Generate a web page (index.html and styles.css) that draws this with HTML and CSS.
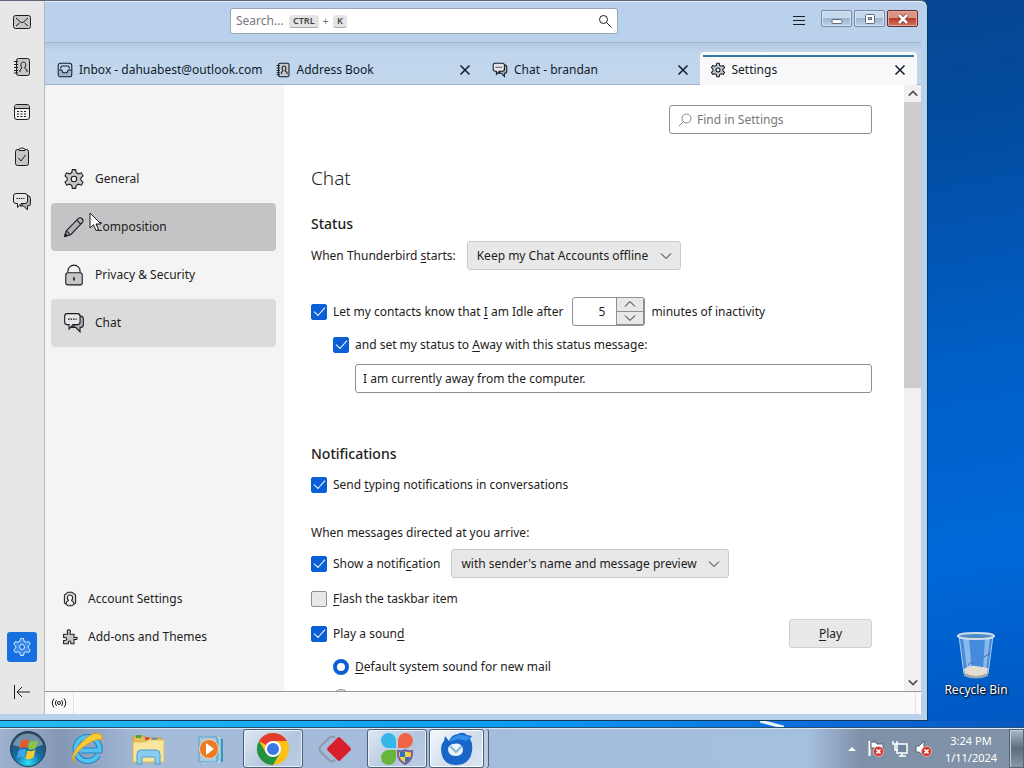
FILE: index.html
```html
<!DOCTYPE html>
<html lang="en">
<head>
    <meta charset="UTF-8">
    <meta name="viewport" content="width=device-width, initial-scale=1.0">
    <title>Settings - Mozilla Thunderbird</title>
    <link rel="stylesheet" href="styles.css">
</head>
<body>
    <!-- shared icons -->
    <svg class="defs" aria-hidden="true">
        <symbol id="i-mail" viewBox="0 0 20 20">
            <rect x="1.5" y="3.5" width="17" height="13" rx="2" fill="#c6c6c8"/>
            <path d="M4 6l4.500 4Q10 11.300 11.500 10L16 6M4 14l3.500-3M16 14l-3.500-3"/>
        </symbol>
        <symbol id="i-book" viewBox="0 0 20 20">
            <rect x="4.500" y="1.500" width="13" height="17" rx="2" fill="#c6c6c8"/>
            <path d="M2 4.500h4M2 7.500h4M2 10.500h4M2 13.500h4M2 16h4M8 15v-2l2-2c-2-3-1-6 1.300-6s3.300 3 1.200 6l2.500 2v2"/>
        </symbol>
        <symbol id="i-calendar" viewBox="0 0 20 20">
            <rect x="2.500" y="2.500" width="15" height="15" rx="2.500" fill="#f2f2f3"/>
            <path d="M3 6V4.500Q3 3 5 3h10q2 0 2 1.500V6z" fill="#bdbdc0" stroke="none"/>
            <path d="M2.500 6.500h15"/>
            <path d="M5 9.500h10M5 12h10M5 14.500h10" stroke-dasharray="2 1.500"/>
        </symbol>
        <symbol id="i-tasks" viewBox="0 0 20 20">
            <rect x="3.500" y="2.500" width="13" height="16" rx="2" fill="#c6c6c8"/>
            <path d="M7 2.500q0-1.500 3-1.500t3 1.500v1H7z" fill="#eee"/>
            <path d="M6.500 11l2.500 3 4.500-6"/>
        </symbol>
        <symbol id="i-chat" viewBox="0 0 20 20">
            <path d="M15 3.500q3.500 0 3.500 3v5q0 2.500-2.500 2.500h-.5v4L11.500 14H8l4-3 3-1z" fill="#b0b0b3"/>
            <path d="M4 1.500h9q2.500 0 2.500 2.500v5q0 2.500-2.500 2.500H9L5.500 15.500v-4H4Q1.500 11.500 1.500 9V4Q1.500 1.500 4 1.500z" fill="#e6e6e8"/>
            <path d="M4.500 6.500h8" stroke-dasharray="1.500 .8"/>
        </symbol>
        <symbol id="i-gear" viewBox="0 0 20 20">
            <path d="M8.500 1.500h3l.6 2.700 1.900 1.100 2.700-.9 1.500 2.700-2 1.900v2l2 1.900-1.500 2.700-2.700-.9-1.900 1.100-.6 2.700h-3l-.6-2.700L6 14.700l-2.700.9-1.500-2.700 2-1.900V9l-2-1.900 1.500-2.700 2.700.9 1.900-1.100z" fill="var(--fill, #c6c6c8)"/>
            <circle cx="10" cy="10" r="2.500" fill="var(--hub, #eee)"/>
        </symbol>
        <symbol id="i-pencil" viewBox="0 0 20 20">
            <path d="M1.500 18.500l1.500-5L14 2.200q1.800-1.300 3.400.3t.3 3.400L7 17z" fill="#b2b2b5"/>
            <path d="M12.500 3.700l3.800 3.800M3 13.500l3.500 3.500M1.500 18.500l.7-2.500 1.800 1.800z"/>
        </symbol>
        <symbol id="i-lock" viewBox="0 0 20 20">
            <path d="M4.500 8V6.500a5.500 5.500 0 0 1 11 0V8"/>
            <rect x="2.500" y="8" width="15" height="11" rx="2" fill="#c6c6c8"/>
            <path d="M10 12v3" stroke-width="1.500"/>
        </symbol>
        <symbol id="i-account" viewBox="0 0 20 20">
            <path d="M7.500 1.500h5l4.500 3.500v10l-4.500 3.500h-5L3 15V5z" fill="#d8d8da"/>
            <path d="M5.500 16v-2l2.500-2C5.500 8 7 5 10 5s4.500 3 2 7l2.500 2v2" fill="#f4f4f5"/>
        </symbol>
        <symbol id="i-addons" viewBox="0 0 20 20">
            <path d="M2 6.500h5V5Q5.500 1 8.500 1T10 5v1.500h5v4h1.500q2.500-.8 2.500 1.200t-2.500 1.300H15v5.500h-4V16.500q0-1.500-1.500-1.500T8 16.500v2H2v-4h1.500q2.500 0 2.500-2T3.500 10.500H2z" fill="#c6c6c8"/>
        </symbol>
        <symbol id="i-inbox" viewBox="0 0 20 20">
            <path d="M2.500 10H6l1.500 3.500h5L14 10h3.500v6l-2 2h-11l-2-2z" fill="#9fb3c8" stroke="none"/>
            <rect x="1.500" y="1.500" width="17" height="17" rx="3"/>
            <path d="M2 10h4l1.500 3.500h5L14 10h4M4.500 8V7L6 5h8l1.500 2v1"/>
        </symbol>
        <symbol id="i-close" viewBox="0 0 12 12">
            <path d="M1.500 1.500l9 9M10.500 1.500l-9 9"/>
        </symbol>
        <symbol id="i-search" viewBox="0 0 14 14">
            <circle cx="5.500" cy="5.500" r="4"/>
            <path d="M8.500 8.500l5 5"/>
        </symbol>
        <symbol id="i-down" viewBox="0 0 12 8">
            <path d="M1 1.500l5 5 5-5"/>
        </symbol>
        <symbol id="i-up" viewBox="0 0 12 8">
            <path d="M1 6.500l5-5 5 5"/>
        </symbol>
        <symbol id="i-error" viewBox="0 0 12 12">
            <circle cx="6" cy="6" r="5.500" fill="#cf3a32" stroke="#f0b5ae"/>
            <path d="M3.800 3.800l4.400 4.400M8.200 3.800L3.800 8.200" stroke="#fff" stroke-width="1.800"/>
        </symbol>
    </svg>

    <div class="desktop">
        <div class="window">
            <nav class="spaces" aria-label="Spaces">
                <button class="space" aria-label="Mail"><svg class="icon"><use href="#i-mail"/></svg></button>
                <button class="space" aria-label="Address Book"><svg class="icon"><use href="#i-book"/></svg></button>
                <button class="space" aria-label="Calendar"><svg class="icon"><use href="#i-calendar"/></svg></button>
                <button class="space" aria-label="Tasks"><svg class="icon"><use href="#i-tasks"/></svg></button>
                <button class="space" aria-label="Chat"><svg class="icon"><use href="#i-chat"/></svg></button>
                <button class="space space-active" aria-label="Settings"><svg class="icon"><use href="#i-gear"/></svg></button>
                <button class="space" aria-label="Collapse">
                    <svg class="icon" viewBox="0 0 20 20"><path d="M2.500 3v14M18 10H5M10 5l-5 5 5 5"/></svg>
                </button>
            </nav>

            <div class="main">
                <header class="titlebar">
                    <div class="global-search">
                        <input type="search" class="global-input" aria-label="Search" placeholder="Search...">
                        <span class="keys"><kbd>CTRL</kbd> + <kbd>K</kbd></span>
                        <svg class="icon-search"><use href="#i-search"/></svg>
                    </div>
                    <div class="title-end">
                        <button class="menu-button" aria-label="Menu">
                            <svg class="icon-menu" viewBox="0 0 12 12"><path d="M0 1.500h12M0 5.500h12M0 9.500h12"/></svg>
                        </button>
                        <div class="controls">
                            <button class="control" aria-label="Minimize">
                                <svg class="icon-control" viewBox="0 0 14 12"><rect x="2" y="6.500" width="10" height="4" rx="1" fill="#fff" stroke="#5b6b80"/></svg>
                            </button>
                            <button class="control" aria-label="Maximize">
                                <svg class="icon-control" viewBox="0 0 14 12"><rect x="2.500" y="1.500" width="9" height="9" rx="1" fill="#fff" stroke="#5b6b80"/><rect x="5.500" y="4.500" width="3" height="2" fill="#a9bdd6" stroke="#5b6b80"/></svg>
                            </button>
                            <button class="control control-close" aria-label="Close">
                                <svg class="icon-control" viewBox="0 0 14 12"><path d="M3 2l8 8M11 2l-8 8" stroke="#6d3333" stroke-width="4"/><path d="M3 2l8 8M11 2l-8 8" stroke="#fff" stroke-width="2.500"/></svg>
                            </button>
                        </div>
                    </div>
                </header>

                <div class="tabs">
                    <div class="tab">
                        <svg class="icon-tab"><use href="#i-inbox"/></svg>
                        <span class="tab-label">Inbox - dahuabest@outlook.com</span>
                    </div>
                    <div class="tab">
                        <svg class="icon-tab"><use href="#i-book"/></svg>
                        <span class="tab-label">Address Book</span>
                        <button class="tab-close" aria-label="Close Address Book"><svg class="icon-close"><use href="#i-close"/></svg></button>
                    </div>
                    <div class="tab">
                        <svg class="icon-tab"><use href="#i-chat"/></svg>
                        <span class="tab-label">Chat - brandan</span>
                        <button class="tab-close" aria-label="Close Chat"><svg class="icon-close"><use href="#i-close"/></svg></button>
                    </div>
                    <div class="tab tab-active">
                        <svg class="icon-tab"><use href="#i-gear"/></svg>
                        <span class="tab-label">Settings</span>
                        <button class="tab-close" aria-label="Close Settings"><svg class="icon-close"><use href="#i-close"/></svg></button>
                    </div>
                </div>

                <div class="page">
                    <aside class="categories">
                        <button class="category"><svg class="icon-category"><use href="#i-gear"/></svg>General</button>
                        <button class="category category-hover">
                            <svg class="icon-category"><use href="#i-pencil"/></svg>Composition
                            <svg class="cursor" viewBox="0 0 14 20"><path d="M1 1v15l3.500-3.300L7 18.500l2.500-1L7 12h5z" fill="#fff"/></svg>
                        </button>
                        <button class="category"><svg class="icon-category"><use href="#i-lock"/></svg>Privacy &amp; Security</button>
                        <button class="category category-selected"><svg class="icon-category"><use href="#i-chat"/></svg>Chat</button>
                        <div class="side-links">
                            <a class="side-link" href="#"><svg class="icon-side"><use href="#i-account"/></svg>Account Settings</a>
                            <a class="side-link" href="#"><svg class="icon-side"><use href="#i-addons"/></svg>Add-ons and Themes</a>
                        </div>
                    </aside>

                    <main class="content">
                        <div class="find">
                            <svg class="icon-find" viewBox="0 0 14 14"><circle cx="8.500" cy="5.500" r="4.500"/><path d="M5.500 8.500L1 13"/></svg>
                            <input type="search" class="find-input" aria-label="Find in Settings" placeholder="Find in Settings">
                        </div>

                        <h1>Chat</h1>

                        <section class="group">
                            <h2>Status</h2>
                            <div class="row row-select">
                                <label for="startup">When Thunderbird <u>s</u>tarts:</label>
                                <span class="select">
                                    <select id="startup"><option>Keep my Chat Accounts offline</option></select>
                                    <svg class="chevron"><use href="#i-down"/></svg>
                                </span>
                            </div>
                            <div class="row row-idle">
                                <input type="checkbox" id="idle" checked>
                                <label for="idle">Let my contacts know that <u>I</u> am Idle after</label>
                                <span class="number">
                                    <input type="number" class="number-input" value="5" aria-label="Minutes of inactivity">
                                    <span class="spin">
                                        <button class="spin-button" aria-label="Increase"><svg class="chevron"><use href="#i-up"/></svg></button>
                                        <button class="spin-button" aria-label="Decrease"><svg class="chevron"><use href="#i-down"/></svg></button>
                                    </span>
                                </span>
                                <span>minutes of inactivity</span>
                            </div>
                            <div class="row indent">
                                <input type="checkbox" id="away" checked>
                                <label for="away">and set my status to <u>A</u>way with this status message:</label>
                            </div>
                            <div class="row indent-more">
                                <input type="text" class="text-input" aria-label="Status message" value="I am currently away from the computer.">
                            </div>
                        </section>

                        <section class="group">
                            <h2>Notifications</h2>
                            <div class="row row-typing">
                                <input type="checkbox" id="typing" checked>
                                <label for="typing">Send <u>t</u>yping notifications in conversations</label>
                            </div>
                            <p class="lead">When messages directed at you arrive:</p>
                            <div class="row row-show">
                                <input type="checkbox" id="show" checked>
                                <label for="show">Show a notifi<u>c</u>ation</label>
                                <span class="select">
                                    <select aria-label="Notification content"><option>with sender's name and message preview</option></select>
                                    <svg class="chevron"><use href="#i-down"/></svg>
                                </span>
                            </div>
                            <div class="row row-flash">
                                <input type="checkbox" id="flash">
                                <label for="flash"><u>F</u>lash the taskbar item</label>
                            </div>
                            <div class="row row-sound">
                                <input type="checkbox" id="sound" checked>
                                <label for="sound">Play a soun<u>d</u></label>
                                <button class="play"><u>P</u>lay</button>
                            </div>
                            <div class="row indent">
                                <input type="radio" name="sound-type" id="default-sound" checked>
                                <label for="default-sound"><u>D</u>efault system sound for new mail</label>
                            </div>
                            <div class="row indent">
                                <input type="radio" name="sound-type" aria-label="Sound file">
                            </div>
                        </section>
                    </main>

                    <div class="scrollbar">
                        <button class="scroll-arrow" aria-label="Scroll up"><svg class="icon-scroll"><use href="#i-up"/></svg></button>
                        <div class="scroll-track"><div class="scroll-thumb"></div></div>
                        <button class="scroll-arrow" aria-label="Scroll down"><svg class="icon-scroll"><use href="#i-down"/></svg></button>
                    </div>
                </div>

                <footer class="statusbar">
                    <button class="status-button" aria-label="Activity">
                        <svg class="icon-status" viewBox="0 0 18 12"><circle cx="9" cy="6" r="1.500"/><path d="M6.500 3q-2.500 3 0 6M11.500 3q2.500 3 0 6M4 1.500Q.5 6 4 10.500M14 1.500q3.500 4.500 0 9"/></svg>
                    </button>
                    <span class="status-end"></span>
                </footer>
            </div>
        </div>

        <div class="desktop-icons">
            <a class="desktop-icon" href="#">
                <svg class="icon-bin" viewBox="0 0 40 48">
                    <path d="M3 5l5 38q12 6 24 0l5-38z" fill="#5c9ae0" fill-opacity=".75" stroke="#a8cdf0"/>
                    <path d="M7 7l4 33h5L13 7zM29 7l-2 33h3l4-33z" fill="#b9d8f5" fill-opacity=".6"/>
                    <path d="M8 38q6-4 12-3t12 2l-1 6q-11 5-22 0z" fill="#e4ddd0"/>
                    <path d="M8 42q12 6 24 0v3q-12 5-24 0z" fill="#9aa6ae"/>
                    <path d="M12 34l3-3 2 2M28 26l6-4" stroke="#4961b8" fill="none"/>
                    <ellipse cx="20" cy="5" rx="18" ry="3" fill="#538bc8" stroke="#cfdfe9" stroke-width="2"/>
                </svg>
                Recycle Bin
            </a>
        </div>
    </div>

    <div class="taskbar">
        <button class="start" aria-label="Start">
            <svg class="icon-start" viewBox="0 0 38 38">
                <defs>
                    <radialGradient id="orb" cx=".5" cy=".9" r=".85">
                        <stop offset="0" stop-color="#2fe0f5"/>
                        <stop offset=".45" stop-color="#136ea8"/>
                        <stop offset="1" stop-color="#2b4560"/>
                    </radialGradient>
                </defs>
                <circle cx="19" cy="19" r="17.500" fill="url(#orb)" stroke="#253b54"/>
                <path d="M4 15a15.500 15.500 0 0 1 30 0q-15 5-30 0z" fill="#cfe0ee" fill-opacity=".45"/>
                <path d="M12 11q4-3 8-1l-2 8q-4-2-8 1z" fill="#e8592b"/>
                <path d="M21 11q4 2 8-1l-2 8q-4 3-8 1z" fill="#8cc63e"/>
                <path d="M9.500 20.500q4-3 8-1l-2 8q-4-2-8 1z" fill="#3fa3e8"/>
                <path d="M18.500 20.500q4 2 8-1l-2 8q-4 3-8 1z" fill="#fccb2f"/>
            </svg>
        </button>
        <button class="task" aria-label="Internet Explorer">
            <svg class="icon-task" viewBox="0 0 34 34">
                <path d="M28 23a12 12 0 1 1 1.500-4.500H11" fill="none" stroke="#2183c6" stroke-width="6"/>
                <path d="M28 23a12 12 0 1 1 1.500-4.500H11" fill="none" stroke="#50c3ef" stroke-width="4"/>
                <path d="M4 31Q-1 23 12 10T31 3q2 1 0 6-1-5-15 4T4 31z" fill="#f8cc35" stroke="#d99e1f"/>
            </svg>
        </button>
        <button class="task" aria-label="File Explorer">
            <svg class="icon-task" viewBox="0 0 34 34">
                <path d="M1 6q0-2 2-2h9l2 2h14q2 0 2 2v22H1z" fill="#e5bd59" stroke="#c29a39"/>
                <path d="M4 3h5v3H4z" fill="#42a944"/>
                <path d="M13 5h4v3h-4z" fill="#d9482e"/>
                <path d="M20 6h5v3h-5z" fill="#3e8dc4"/>
                <path d="M1 10h13l2-2h16v22H1z" fill="#f8e6a0" stroke="#ddbd62"/>
                <path d="M5 32V22q0-4 4-4h15q4 0 4 4v10h-5v-7H10v7z" fill="#8bcdf0" stroke="#4b9dcc"/>
            </svg>
        </button>
        <button class="task" aria-label="Media Player">
            <svg class="icon-task" viewBox="0 0 34 34">
                <path d="M11 5l18 2v23l-18 1z" fill="#3f96bd"/>
                <path d="M8 5l18 1v24l-18 1z" fill="#79bcd8" stroke="#dceef7"/>
                <path d="M5 5h18v25H5z" fill="#a5cbe4" stroke="#5b9cc4"/>
                <circle cx="15" cy="17" r="9.500" fill="#ec7a23" stroke="#f8d1a5"/>
                <path d="M12 11l8 6-8 6z" fill="#fff"/>
            </svg>
        </button>
        <button class="task task-open" aria-label="Chrome">
            <svg class="icon-task" viewBox="0 0 34 34">
                <circle cx="17" cy="17" r="16" fill="#fbc116"/>
                <path d="M17 17L3.100 9A16 16 0 0 1 30.900 9H17z" fill="#e33b2e"/>
                <path d="M3.100 9A16 16 0 0 0 17 33l7-12-7 3-7-3z" fill="#229342"/>
                <circle cx="17" cy="17" r="8" fill="#fff"/>
                <circle cx="17" cy="17" r="6" fill="#3b78e7"/>
            </svg>
        </button>
        <button class="task" aria-label="Remote desktop">
            <svg class="icon-task" viewBox="0 0 34 34">
                <path d="M17 6q-3-3-6 0L3 14q-3 3 0 6l8 8q3 3 6 0" fill="none" stroke="#8f98a8" stroke-width="2"/>
                <rect x="12" y="8" width="18" height="18" rx="2" transform="rotate(45 21 17)" fill="#d9202a"/>
            </svg>
        </button>
        <button class="task task-open" aria-label="Installer">
            <svg class="icon-task" viewBox="0 0 34 34">
                <path d="M16 16H8a7.500 7.500 0 1 1 8-8z" fill="#35b6e8"/>
                <path d="M18 16h8a7.500 7.500 0 1 0-8-8z" fill="#ee6545"/>
                <path d="M16 18H8a7.500 7.500 0 1 0 8 8z" fill="#67b53c"/>
                <path d="M18 19q4 1 7-1 3 2 7 1 1 9-7 13-8-4-7-13z" fill="#f6d23d" stroke="#7a5da0" stroke-width="2"/>
                <path d="M20 20q3 0 5-1v6h-5zM25 25h5q-1 4-5 6z" fill="#2f72c4"/>
            </svg>
        </button>
        <button class="task task-open task-current" aria-label="Thunderbird">
            <svg class="icon-task" viewBox="0 0 34 34">
                <path d="M1 18q0-6 3-9l1-5 4 5q2-6 9-7 5-3 9 1l5 1-2 3q3 4 2 12-2 14-16 14T1 18z" fill="#1a65c8"/>
                <path d="M14 5q6-4 12-1l5 1-5 4q-9-4-16 1 1-4 4-5z" fill="#338fea"/>
                <path d="M8 18q0-5 5-6 8-2 10 5 0 7-7 7-7 0-8-6z" fill="#eaf3fc"/>
                <path d="M10 14l6 6 6-6" fill="none" stroke="#8db4dd" stroke-width="2"/>
            </svg>
        </button>

        <div class="tray">
            <button class="tray-button" aria-label="Show hidden icons"><svg class="icon-arrow" viewBox="0 0 8 5"><path d="M0 5l4-4 4 4z" fill="#fff" stroke="none"/></svg></button>
            <button class="tray-button" aria-label="Action Center">
                <svg class="icon-tray" viewBox="0 0 18 18"><path d="M2.500 1v15" stroke="#fff" stroke-width="2"/><path d="M4 2h5l1 2h6v6H9L8 8H4z" fill="#fff" stroke="#54616f"/><use href="#i-error" x="6" y="6" width="11" height="11"/></svg>
            </button>
            <button class="tray-button" aria-label="Network">
                <svg class="icon-tray" viewBox="0 0 18 18"><path d="M6 4h10v9H6zM8 16h7M11 13v3" fill="#71839a" stroke="#fff" stroke-width="1.500"/><path d="M2 1v3h4V1M4 4v6h3" stroke="#fff" fill="none" stroke-width="1.500"/></svg>
            </button>
            <button class="tray-button" aria-label="Volume">
                <svg class="icon-tray" viewBox="0 0 18 18"><path d="M1 6h3l5-5v15l-5-4H1z" fill="#fff" stroke="#54616f"/><use href="#i-error" x="6" y="6" width="11" height="11"/></svg>
            </button>
        </div>
        <button class="clock"><span>3:24 PM</span><span>1/11/2024</span></button>
        <button class="show-desktop" aria-label="Show desktop"></button>
    </div>
</body>
</html>
```

FILE: styles.css
```css
* {
    box-sizing: border-box;
}

body {
    margin: 0;
    height: 100vh;
    display: flex;
    flex-direction: column;
    overflow: hidden;
    font-family: 'Noto Sans', 'Open Sans', sans-serif;
    font-size: 12px;
    line-height: 22px;
    color: #1d1c20;
}

button, input, select {
    font: inherit;
    color: inherit;
    margin: 0;
}

button {
    border: none;
    background: none;
    padding: 0;
}

a {
    color: inherit;
    text-decoration: none;
}

u {
    text-underline-offset: 2px;
}

svg {
    display: block;
    flex-shrink: 0;
    fill: none;
    stroke: currentColor;
}

input::-webkit-search-cancel-button,
input::-webkit-inner-spin-button {
    display: none;
}

.defs {
    position: absolute;
    width: 0;
    height: 0;
}

.icon {
    width: 20px;
    height: 20px;
}

/* desktop and window frame */

.desktop {
    flex: 1;
    min-height: 0;
    display: flex;
    padding-bottom: 7px;
    background:
        linear-gradient(15deg, transparent 35%, #e8f6ff 45%, #e8f6ff 60%, transparent 70%) 76% 100% / 24px 7px no-repeat,
        linear-gradient(90deg, #25bdf0, #0c9cf4 50%, #0a6bdc 80%, #0858c0) 0 100% / 100% 7px no-repeat,
        linear-gradient(170deg, #0b4283, #034a9c 30%, #0060c8 60%, #0068d8 80%, #0058c2);
}

.window {
    flex: 1;
    min-width: 0;
    display: flex;
    padding-right: 6px;
    padding-bottom: 6px;
    border-top: 1px solid #5d6478;
    border-right: 1px solid #10395f;
    border-bottom: 1px solid #10395f;
    border-top-right-radius: 7px;
    background: #b9d1ea;
    box-shadow: inset 0 1px #e8f0fa, inset -1px 0 #9fd8f4;
}

.spaces {
    width: 45px;
    flex-shrink: 0;
    display: flex;
    flex-direction: column;
    align-items: center;
    gap: 15px;
    padding: 6px 0 7px;
    background: #e7e7e8;
    border-right: 1px solid #b4b8bd;
}

.space {
    width: 30px;
    height: 30px;
    display: grid;
    place-items: center;
    border-radius: 3px;
}

.space-active {
    margin-top: auto;
    background: #1670df;
    color: #d5e9ff;
    --fill: #3d8cec;
    --hub: #1670df;
}

.main {
    flex: 1;
    min-width: 0;
    display: flex;
    flex-direction: column;
}

/* title bar */

.titlebar {
    height: 42px;
    display: flex;
    justify-content: flex-end;
    gap: 174px;
    padding-right: 3px;
    border-bottom: 1px solid #9fb2ca;
}

.global-search {
    flex: 0 1 388px;
    height: 26px;
    margin-top: 7px;
    display: flex;
    align-items: center;
    padding: 0 5px;
    background: #fff;
    border: 1px solid #9aa7b7;
    border-radius: 3px;
}

.global-input {
    width: 53px;
    padding: 0;
    border: none;
    outline: none;
    background: none;
}

.global-input::placeholder,
.find-input::placeholder {
    color: #77777b;
    opacity: 1;
}

.keys {
    flex: 1;
    display: flex;
    align-items: center;
    gap: 4px;
    font-size: 11px;
    color: #77777b;
}

kbd {
    padding: 0 4px;
    font-family: inherit;
    font-size: 9px;
    font-weight: 600;
    line-height: 12px;
    color: #444;
    background: #e4e4e5;
    border-bottom: 1px solid #aaa;
    border-radius: 3px;
}

.icon-search {
    width: 14px;
    height: 14px;
}

.title-end {
    display: flex;
    gap: 15px;
}

.menu-button {
    align-self: flex-start;
    width: 14px;
    height: 40px;
    display: grid;
    place-items: center;
}

.icon-menu {
    width: 12px;
    height: 12px;
}

.controls {
    display: flex;
    gap: 2px;
    padding-top: 9px;
}

.control {
    width: 31px;
    height: 17px;
    display: grid;
    place-items: center;
    border: 1px solid #7389a6;
    border-radius: 2px;
    background: linear-gradient(#c7d9ed 45%, #9fb6d2 50%, #b9d0ea);
    box-shadow: inset 0 0 0 1px #d7e5f4;
}

.control-close {
    border-color: #632c33;
    background: linear-gradient(#dc9284 45%, #b83c2d 50%, #d7725a);
    box-shadow: inset 0 0 0 1px #e8a99e;
}

.icon-control {
    width: 14px;
    height: 12px;
}

/* tabs */

.tabs {
    height: 42px;
    display: flex;
    padding: 9px 4px 0 2px;
    background: linear-gradient(#b3c7df, #bfd5ec 8px, #c2d7ec);
    border-bottom: 1px solid #9eb1c8;
}

.tab {
    flex: 1;
    min-width: 0;
    display: flex;
    align-items: center;
    gap: 6px;
    padding: 3px 11px 0 10px;
    white-space: nowrap;
    color: #101c2b;
}

.tab-active {
    margin-bottom: -1px;
    background: linear-gradient(#2f7ba5, #2f7ba5) 50% 3px / calc(100% - 6px) 2px no-repeat, #f9f9fa;
    border-radius: 4px 4px 0 0;
}

.tab-label {
    flex: 1;
}

.icon-tab {
    width: 16px;
    height: 16px;
    stroke-width: 1.3;
}

.icon-close {
    width: 12px;
    height: 12px;
    stroke-width: 1.5;
}

/* settings page */

.page {
    flex: 1;
    min-height: 0;
    display: flex;
    background: #fff;
    overflow: hidden;
}

.categories {
    width: 239px;
    flex-shrink: 0;
    display: flex;
    flex-direction: column;
    padding: 70px 8px 35px 6px;
    background: #f4f4f5;
}

.category {
    position: relative;
    height: 48px;
    flex-shrink: 0;
    display: flex;
    align-items: center;
    gap: 10px;
    padding-left: 12px;
    border-radius: 4px;
    text-align: left;
}

.category-hover {
    background: #c4c4c6;
}

.category-selected {
    background: #dbdbdc;
}

.icon-category {
    width: 22px;
    height: 22px;
}

.cursor {
    position: absolute;
    left: 38px;
    top: 9px;
    width: 14px;
    height: 20px;
}

.side-links {
    margin-top: auto;
}

.side-link {
    height: 38px;
    display: flex;
    align-items: center;
    gap: 10px;
    padding-left: 11px;
}

.icon-side {
    width: 16px;
    height: 16px;
    stroke-width: 1.3;
}

.content {
    flex: 1;
    min-width: 0;
    padding: 20px 32px 0 27px;
}

.find {
    width: 203px;
    height: 29px;
    margin-left: auto;
    display: flex;
    align-items: center;
    gap: 5px;
    padding: 0 8px;
    border: 1px solid #8f8f94;
    border-radius: 3px;
}

.find-input {
    flex: 1;
    min-width: 0;
    padding: 0;
    border: none;
    outline: none;
}

.icon-find {
    width: 14px;
    height: 14px;
    color: #85858a;
}

h1 {
    margin: 30px 0 20px;
    font-size: 19px;
    font-weight: 300;
    line-height: 28px;
}

h2 {
    margin: 0 0 -3px;
    font-size: 14px;
    font-weight: 500;
    line-height: 24px;
}

.group {
    display: flex;
    flex-direction: column;
    gap: 8px;
    margin-bottom: 49px;
}

.row {
    display: flex;
    align-items: center;
    gap: 6px;
    min-height: 22px;
    white-space: nowrap;
}

.row-select {
    gap: 11px;
}

.row-idle {
    margin-top: 19px;
}

.row-typing {
    margin-top: 3px;
}

.indent {
    padding-left: 22px;
}

.indent-more {
    padding-left: 44px;
}

.lead {
    margin: 18px 0 -4px;
}

.row-show {
    margin-top: 1px;
}

.row-show .select {
    margin-left: 5px;
}

.row-flash {
    margin-top: 2px;
}

.row-sound {
    margin-top: 1px;
}

input[type="checkbox"],
input[type="radio"] {
    appearance: none;
    width: 16px;
    height: 16px;
    flex-shrink: 0;
    display: grid;
    place-items: center;
    border: 1px solid #8f8f94;
    border-radius: 2px;
    background: #e8e8e9;
}

input[type="checkbox"]:checked {
    border-color: #0a5fd6;
    background: #0a5fd6;
}

input[type="checkbox"]:checked::before {
    content: "";
    width: 10px;
    height: 5px;
    margin-bottom: 4px;
    border-left: 1px solid #fff;
    border-bottom: 1px solid #fff;
    transform: rotate(-48deg);
}

input[type="radio"] {
    border-radius: 50%;
}

input[type="radio"]:checked {
    border: 4px solid #0a5fd6;
    background: #fff;
}

.select {
    display: grid;
    align-items: center;
}

.select select {
    grid-area: 1 / 1;
    appearance: none;
    height: 29px;
    padding: 0 31px 0 9px;
    border: 1px solid #c9c9cb;
    border-radius: 3px;
    background: #e8e8e9;
}

.select .chevron {
    grid-area: 1 / 1;
    justify-self: end;
    margin-right: 9px;
    pointer-events: none;
}

.chevron {
    width: 12px;
    height: 8px;
}

.number {
    display: flex;
    width: 73px;
    height: 29px;
    margin-left: 3px;
    border: 1px solid #8f8f94;
    border-radius: 3px;
}

.number-input {
    flex: 1;
    min-width: 0;
    padding: 0 11px;
    border: none;
    outline: none;
    background: none;
    text-align: right;
    appearance: textfield;
}

.spin {
    width: 28px;
    display: grid;
    border: 1px solid #8f8f94;
    border-width: 0 1px 1px;
    background: #e8e8e9;
}

.spin-button {
    display: grid;
    place-items: center;
}

.spin-button + .spin-button {
    border-top: 1px solid #8f8f94;
}

.text-input {
    flex: 1;
    height: 29px;
    padding: 0 7px;
    border: 1px solid #8f8f94;
    border-radius: 3px;
}

.play {
    width: 83px;
    height: 29px;
    margin-left: auto;
    border: 1px solid #d0d0d2;
    border-radius: 3px;
    background: #e8e8e9;
}

.scrollbar {
    width: 17px;
    display: flex;
    flex-direction: column;
    background: #f0f0f0;
}

.scroll-arrow {
    height: 17px;
    display: grid;
    place-items: center;
}

.icon-scroll {
    width: 10px;
    height: 7px;
    color: #505050;
    stroke-width: 2;
}

.scroll-track {
    flex: 1;
}

.scroll-thumb {
    height: 50%;
    background: #cdcdcd;
}

.statusbar {
    height: 23px;
    display: flex;
    justify-content: space-between;
    border-top: 1px solid #97999d;
    background: #f9f9fa;
}

.status-button {
    padding: 0 5px;
    border-right: 1px solid #e2e2e4;
}

.icon-status {
    width: 18px;
    height: 12px;
}

.status-end {
    width: 6px;
    border-left: 1px solid #e2e2e4;
}

/* desktop icons */

.desktop-icons {
    width: 96px;
    display: flex;
    flex-direction: column;
    justify-content: flex-end;
    align-items: center;
    padding-bottom: 20px;
}

.desktop-icon {
    display: flex;
    flex-direction: column;
    align-items: center;
    color: #fff;
    text-shadow: 1px 1px 2px #000, 0 0 2px #000;
}

.icon-bin {
    width: 40px;
    height: 48px;
    stroke: none;
}

/* taskbar */

.taskbar {
    height: 40px;
    display: flex;
    align-items: stretch;
    gap: 2px;
    border-top: 1px solid #dbe7f2;
    background: linear-gradient(90deg, #9cb2ce, #8498b5 6%, #a4bbd9 14%, #a5bfdf 79%, #7f91a8 84%, #8192a6);
    box-shadow: 0 -1px #2b506f;
}

.start {
    width: 55px;
    display: grid;
    place-items: center;
}

.icon-start {
    width: 38px;
    height: 38px;
    stroke: none;
}

.task {
    width: 60px;
    display: grid;
    place-items: center;
    border-radius: 3px;
}

.task-open {
    border: 1px solid #4c6078;
    background: linear-gradient(135deg, #dfe8f3, #b3c6df 60%, #bccde4);
    box-shadow: inset 0 0 0 1px #e6eef7;
}

.task-current {
    width: 55px;
    background: linear-gradient(135deg, #f6f9fc, #cfdcec 60%, #dce7f2);
    box-shadow: inset 0 0 0 1px #fff, 4px 0 #b9cbe0, 5px 0 #4c6078;
}

.icon-task {
    width: 34px;
    height: 34px;
    stroke: none;
}

.tray {
    margin-left: auto;
    display: flex;
    align-items: center;
    gap: 6px;
}

.tray-button {
    width: 18px;
    height: 24px;
    display: grid;
    place-items: center;
}

.icon-arrow {
    width: 8px;
    height: 5px;
}

.icon-tray {
    width: 18px;
    height: 18px;
    stroke: none;
}

.clock {
    width: 72px;
    display: flex;
    flex-direction: column;
    justify-content: center;
    align-items: center;
    font-size: 11px;
    line-height: 17px;
    color: #fff;
}

.show-desktop {
    width: 15px;
    border: 1px solid #53657a;
    background: linear-gradient(#aab7c6, #5c6d80 50%, #8796a8);
    box-shadow: inset 1px 1px #c3cedb;
}
```
